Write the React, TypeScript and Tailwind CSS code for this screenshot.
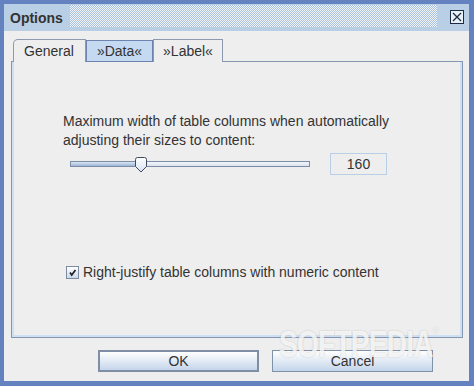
import React from "react";

const font = "font-['Liberation_Sans',Arial,sans-serif]";

function Thumb() {
  return (
    <svg width="14" height="16" viewBox="0 0 14 16" className="absolute left-[63px] top-[-5px]">
      <defs>
        <linearGradient id="tg" x1="0" y1="0" x2="0" y2="1">
          <stop offset="0" stopColor="#ffffff" />
          <stop offset="1" stopColor="#d6e2f0" />
        </linearGradient>
      </defs>
      <path d="M1.5 2.5 Q1.5 0.5 3.5 0.5 L10.5 0.5 Q12.5 0.5 12.5 2.5 L12.5 9.5 L7 15 L1.5 9.5 Z" fill="url(#tg)" stroke="#3f4a5c" strokeWidth="1" />
    </svg>
  );
}

function Check() {
  return (
    <div className="w-[13px] h-[13px] border border-[#7d8aa0] bg-[linear-gradient(#ffffff,#c9d8ea)] flex items-center justify-center">
      <svg width="9" height="9" viewBox="0 0 9 9">
        <path d="M2 4.5 L3.7 7 L7.5 2" fill="none" stroke="#222" strokeWidth="1.7" />
      </svg>
    </div>
  );
}

export default function App() {
  return (
    <div className={`${font} relative overflow-hidden w-[474px] h-[386px] bg-[#6382bf] pt-[4px] pl-[4px] pr-[5px] pb-[5px] flex flex-col text-[#333333]`}>
      {/* Title bar */}
      <div className="h-[27px] bg-[#b8cfe5] flex items-center">
        <div className="pl-[6px] w-[66px] text-[14px] font-bold text-[#333] leading-none">Options</div>
        <div className="flex-1 h-[22px] mt-[-3px] bg-[repeating-conic-gradient(#ffffff_0_25%,#a6bedb_0_50%)] bg-[length:2px_2px] opacity-80" />
        <div className="ml-[13px] mr-[5px] mt-[-2px] w-[14px] h-[14px] border border-[#1c2a44] bg-[#e8f0f8] flex items-center justify-center">
          <svg width="10" height="10" viewBox="0 0 10 10">
            <path d="M1 1 L9 9 M9 1 L1 9" stroke="#1c2a44" strokeWidth="1.3" />
          </svg>
        </div>
      </div>
      {/* Body */}
      <div className="flex-1 bg-[#eeeeee] pt-[8px] pl-[7px] pr-[6px] flex flex-col">
        <div className="flex pl-[2px] h-[23px] items-end relative z-10 text-[14px] text-[#333]">
          <div className="h-[23px] w-[73px] border border-b-0 border-[#8c99ae] rounded-tl-[5px] bg-[#eeeeee] flex items-center pl-[10px]">General</div>
          <div className="h-[22px] w-[67px] border border-[#6d83b0] bg-[#c5daf0] flex items-center justify-center">»Data«</div>
          <div className="h-[23px] w-[70px] border border-b-0 border-[#8c99ae] bg-[#eeeeee] flex items-center justify-center">»Label«</div>
        </div>
        <div className="h-[277px] -mt-px border border-[#8496b2] flex">
          <div className="flex-1 border-2 border-[#cfe0f2] border-t-0 pl-[49px] pt-[50px] flex flex-col">
            <div className="text-[14px] leading-[19px] text-[#333]">
              Maximum width of table columns when automatically
              <br />
              adjusting their sizes to content:
            </div>
            <div className="flex items-center mt-[3px] h-[22px]">
              <div className="ml-[7px] w-[240px] h-[6px] relative border border-[#7e8da6] bg-[linear-gradient(#f4f7fb,#d9e2ee)]">
                <div className="absolute left-0 top-0 h-full w-[68px] bg-[linear-gradient(#dbe6f3,#9db5d8)]" />
                <Thumb />
              </div>
              <div className="ml-[20px] w-[57px] h-[22px] border border-[#b8cfe5] bg-[#eeeeee] flex items-center justify-center text-[14px] text-[#333]">160</div>
            </div>
            <div className="flex items-center mt-[87px] ml-[3px] gap-[4px] text-[14px] text-[#333]">
              <Check />
              <span>Right-justify table columns with numeric content</span>
            </div>
          </div>
        </div>
        <div className="flex justify-end gap-[13px] pr-[30px] mt-[12px] text-[14px] text-[#333]">
          <div className="w-[161px] h-[22px] border-2 border-[#7f8ea5] bg-[linear-gradient(#ffffff,#c4d5ea)] flex items-center justify-center">OK</div>
          <div className="w-[161px] h-[22px] border border-[#8091aa] bg-[linear-gradient(#ffffff,#c4d5ea)] flex items-center justify-center">Cancel</div>
        </div>
      </div>
      <div className="absolute left-[279px] top-[327px] origin-left scale-x-[0.78] whitespace-nowrap text-[36px] font-bold tracking-[-1px] text-white/80 leading-none pointer-events-none [text-shadow:0_0_2px_rgba(0,0,0,0.22)]">
        SOFTPEDIA<span className="text-[9px] align-top">®</span>
      </div>
    </div>
  );
}
